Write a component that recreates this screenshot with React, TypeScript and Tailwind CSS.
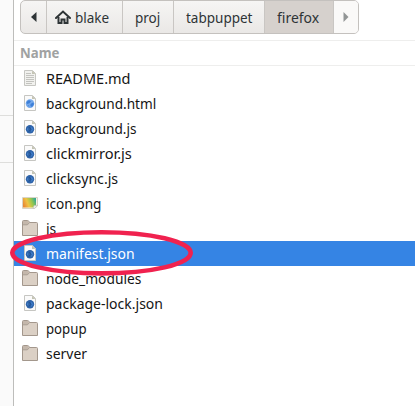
import React from "react";

type Kind = "text" | "html" | "code" | "image" | "folder";

const files: { name: string; kind: Kind; fit: string; selected?: boolean }[] = [
  { name: "README.md", kind: "text", fit: "scale-x-[0.967]" },
  { name: "background.html", kind: "html", fit: "scale-x-[0.908]" },
  { name: "background.js", kind: "code", fit: "scale-x-[0.905]" },
  { name: "clickmirror.js", kind: "code", fit: "scale-x-[0.975]" },
  { name: "clicksync.js", kind: "code", fit: "scale-x-[0.942]" },
  { name: "icon.png", kind: "image", fit: "scale-x-[0.907]" },
  { name: "js", kind: "folder", fit: "scale-x-[0.93]" },
  { name: "manifest.json", kind: "code", fit: "scale-x-[0.93]", selected: true },
  { name: "node_modules", kind: "folder", fit: "scale-x-[0.919]" },
  { name: "package-lock.json", kind: "code", fit: "scale-x-[0.933]" },
  { name: "popup", kind: "folder", fit: "scale-x-[0.88]" },
  { name: "server", kind: "folder", fit: "scale-x-[0.93]" },
];

function FileIcon({ kind }: { kind: Kind }) {
  if (kind === "folder") {
    return (
      <svg width="16" height="16" viewBox="0 0 16 16" className="shrink-0">
        <path d="M.5 1.5Q.5.5 1.5.5H5.5Q6.5.5 7 1.5L7.5 2.5H14.5Q15.5 2.5 15.5 3.5V15.5H.5Z" fill="#dbd0c5" stroke="#a3978c" />
        <path d="M1 1H5.8L7 3L5.2 4.5H1Z" fill="#c4b7ab" />
        <path d="M1 4.8H5.2L7.3 3" fill="none" stroke="#a3978c" strokeWidth=".9" />
      </svg>
    );
  }
  if (kind === "image") {
    return (
      <svg width="16" height="16" viewBox="0 0 16 16" className="shrink-0">
        <defs>
          <linearGradient id="photo" x1="0" y1=".6" x2="1" y2=".3">
            <stop offset="0" stopColor="#e88a35" />
            <stop offset=".35" stopColor="#efc444" />
            <stop offset=".7" stopColor="#93c74e" />
            <stop offset="1" stopColor="#36a794" />
          </linearGradient>
        </defs>
        <path d="M.5 2.5H15.5V11L12.5 13.5H.5Z" fill="#f6f3e4" stroke="#d8d4c6" />
        <path d="M1 3H14V11L11.5 12.5H1Z" fill="url(#photo)" />
        <path d="M11 13.5L12 10.5L15.5 10.3L12.5 13.5Z" fill="#f1f1ed" stroke="#bdbcb5" strokeWidth=".6" />
      </svg>
    );
  }
  return (
    <svg width="16" height="16" viewBox="0 0 16 16" className="shrink-0">
      <path d="M2.5.5H10.5L13.5 3.5V15.5H2.5Z" fill={kind === "text" ? "#f1f1ee" : "#fafafa"} stroke="#c6c6c2" />
      <path d="M10 .5V4H13.5Z" fill="#c4c4b4" />
      {kind === "text" && <path d="M4 3.5H9M4 5.5H12M4 7.5H12M4 9.5H12M4 11.5H12M4 13.5H10" stroke="#bdbdb9" strokeWidth=".9" />}
      {kind === "html" && (
        <>
          <circle cx="8" cy="8.6" r="4.3" fill="#74a8ea" />
          <path d="M4.5 7L7 4.9L9 6.4L7.5 8.3L5 9ZM8.5 9L11 7.5L12 9L10 12L8.4 11Z" fill="#3d7fd8" />
          <path d="M5.5 10L7 10.5L7.3 12Z" fill="#3d7fd8" />
        </>
      )}
      {kind === "code" && (
        <>
          <circle cx="8" cy="9.3" r="4.2" fill="#2d62a8" />
          <path d="M8.8 6L11.7 9.3L8.8 12.6Z" fill="#3c79c6" />
          <path d="M7 7.2L9 9.3L7 11.4" fill="none" stroke="#1e4d89" strokeWidth="1" />
          <path d="M5 8.5L6.2 7.3V10.8L5 9.8Z" fill="#4580c6" />
        </>
      )}
    </svg>
  );
}

export default function App() {
  return (
    <div className="relative flex h-[406px] w-[415px] overflow-hidden bg-white font-['Noto_Sans','Open_Sans',sans-serif] text-[15px] leading-[25px]">
      <aside className="flex w-[14px] shrink-0 flex-col border-r border-[#bdbdbb] bg-[#fafafa]">
        <div className="h-[116px] border-b border-[#dededc]" />
        <div className="h-[47px] border-b border-[#dededc]" />
      </aside>

      <main className="flex min-w-0 flex-1 flex-col">
        <div className="h-10 pl-[6px]">
          <nav className="flex h-[34px] w-[339px] overflow-hidden rounded-[5px] border border-[#c4c1be] bg-linear-to-b from-[#f6f5f4] to-[#eae8e6] text-[#2e3436]">
            <div className="flex w-[26px] items-center justify-center border-r border-[#c9c6c3]">
              <svg width="6" height="10" viewBox="0 0 6 10"><path d="M5.5 0V10L0 5Z" fill="#2e3436" /></svg>
            </div>
            <div className="flex w-[76px] items-center border-r border-[#c9c6c3] pl-2">
              <svg width="16" height="16" viewBox="0 0 16 16" className="mr-1 shrink-0">
                <path d="M1 9L8 2.5L15 9" fill="none" stroke="#2e3436" strokeWidth="2" strokeLinecap="round" />
                <path d="M3.5 8V14H6.5V10.5H9.5V14H12.5V8" fill="none" stroke="#2e3436" strokeWidth="2" />
              </svg>
              <span className="origin-left scale-x-[0.9]">blake</span>
            </div>
            <div className="flex w-[51px] items-center border-r border-[#c9c6c3] pl-3">
              <span className="origin-left scale-x-[0.9]">proj</span>
            </div>
            <div className="flex w-[90px] items-center pl-3">
              <span className="origin-left scale-x-[0.9]">tabpuppet</span>
            </div>
            <div className="flex w-[70px] items-center border-x border-[#c9c6c3] bg-[#d6d1cd] pl-3">
              <span className="origin-left scale-x-[0.93]">firefox</span>
            </div>
            <div className="flex flex-1 items-center justify-center bg-[#faf9f8]">
              <svg width="6" height="10" viewBox="0 0 6 10"><path d="M.5 0V10L5.5 5Z" fill="#929595" /></svg>
            </div>
          </nav>
        </div>

        <header className="flex h-[26px] items-center border-y border-[#eeeeed] pb-px pl-[6px] font-bold text-[#a0a2a2]">
          <span className="origin-left scale-x-[0.88]">Name</span>
        </header>

        <ul>
          {files.map((f) => (
            <li key={f.name} className={"flex h-[25px] items-center pl-2 " + (f.selected ? "bg-[#3584e4] text-white" : "text-[#151515]")}>
              <div className="flex pb-px">
                <FileIcon kind={f.kind} />
              </div>
              <span className={"ml-2 origin-left " + f.fit}>{f.name}</span>
            </li>
          ))}
        </ul>
      </main>

      <svg width="190" height="52" viewBox="0 0 190 52" className="pointer-events-none absolute left-[7px] top-[227px]">
        <ellipse cx="94.5" cy="25.8" rx="89.2" ry="20.6" fill="none" stroke="#f0224f" strokeWidth="4.6" />
      </svg>
    </div>
  );
}
